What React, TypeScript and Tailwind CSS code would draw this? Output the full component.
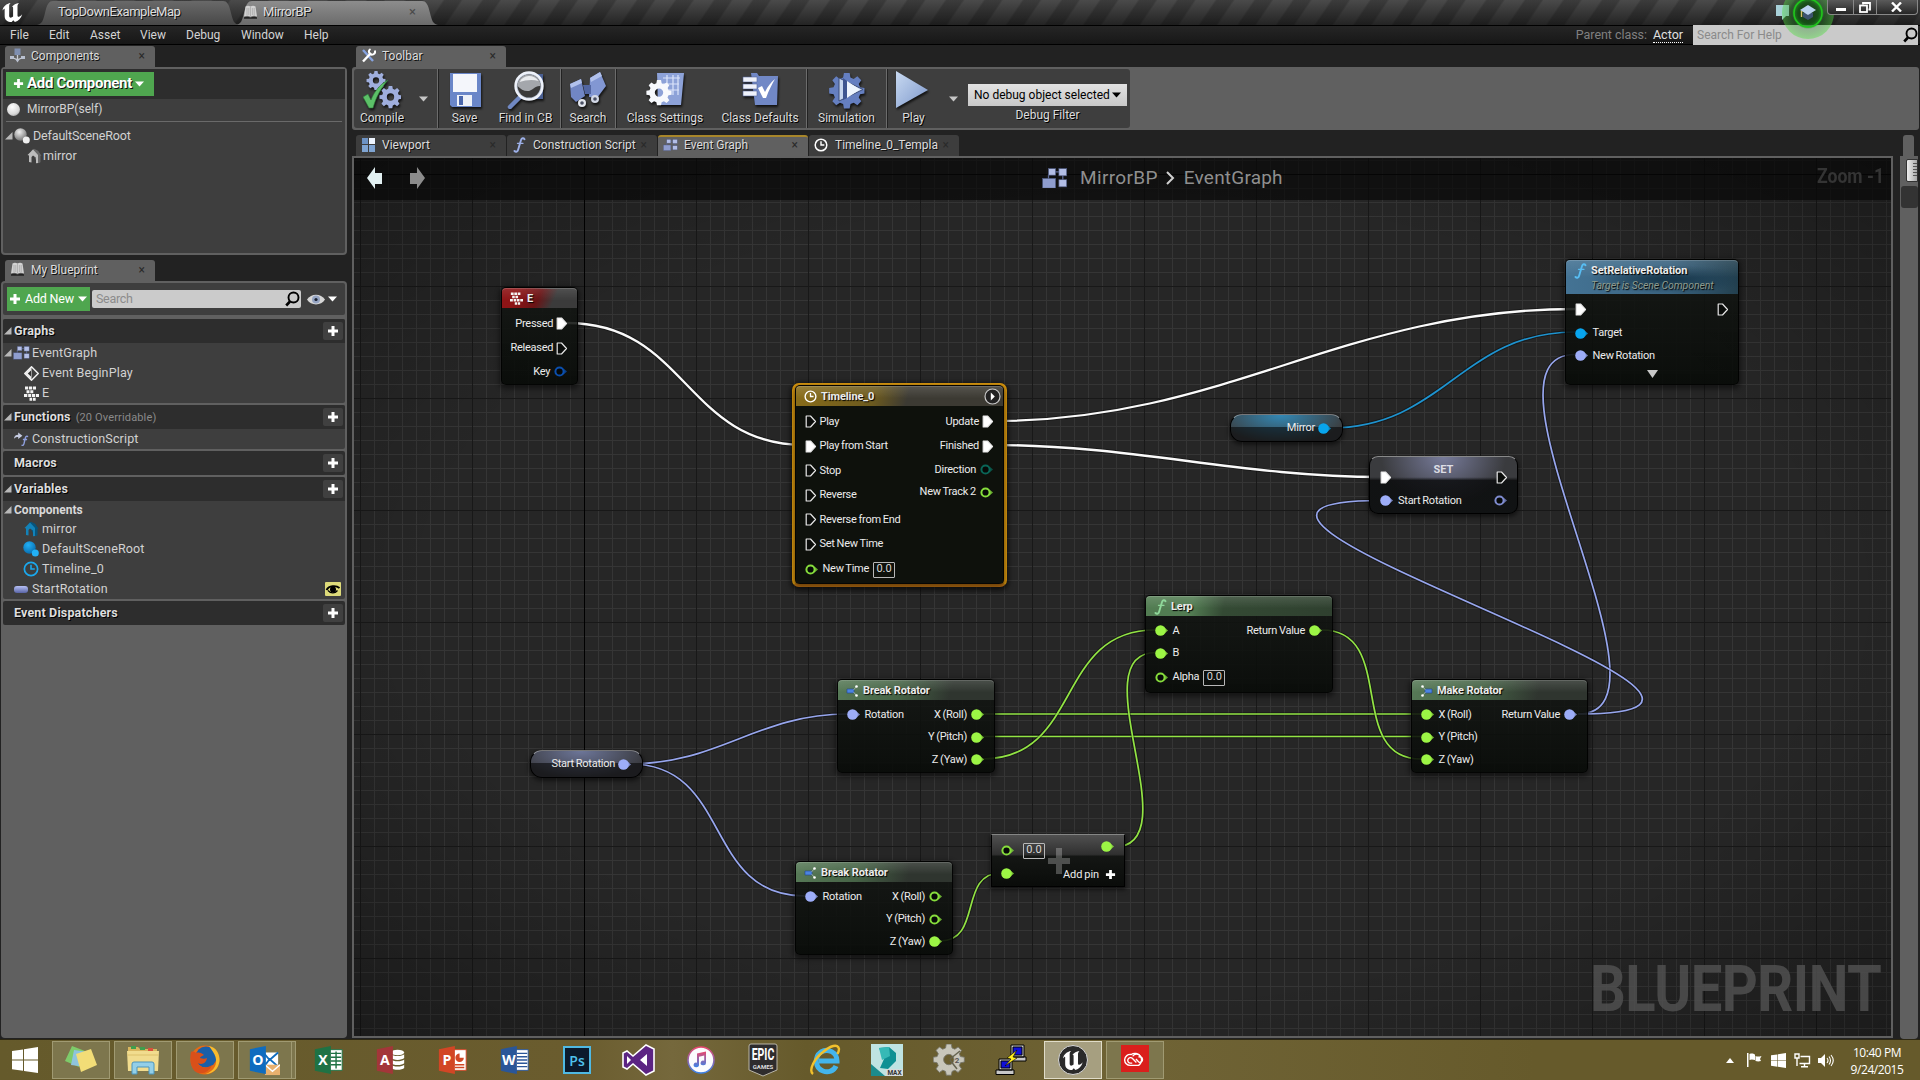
import React from "react";

type P = { children?: React.ReactNode };

const GREEN = "#9cf545";
const ROT = "#9dadf8";

/* ---------- shared glyphs ---------- */

function Unreal({ className = "" }: { className?: string }) {
  return (
    <svg viewBox="0 0 24 24" className={className} fill="currentColor">
      <path d="M1 10C2 5.500 5 3 9.500 2.200 8.300 3.400 8 4.200 8 5.500V15.500c0 1.200.6 1.900 1.500 1.900 1 0 1.900-.4 2.600-1.200V7.300c0-1-.4-1.500-1.300-1.200C12.600 3.700 15 2.500 18.200 2 17 3.400 16.700 4.200 16.700 5.500v9.300c0 1.100.5 1.600 1.300 1.600 1.100 0 2.300-.9 3.600-2.600-1 4-4 7-7.600 8.200L12.300 20l-1.700 2c-4.400-.1-7.300-2.400-7.300-6.200V8.500C3.300 7.600 2.700 7.700 1 10z" />
    </svg>
  );
}

function Plus({ s = 12, c = "#fff" }: { s?: number; c?: string }) {
  return (
    <svg width={s} height={s} viewBox="0 0 12 12" className="shrink-0">
      <path d="M4.500 1h3v3.500H11v3H7.500V11h-3V7.500H1v-3h3.500z" fill={c} />
    </svg>
  );
}

function Caret({ c = "#fff" }: { c?: string }) {
  return (
    <svg width="9" height="6" viewBox="0 0 9 6" className="shrink-0">
      <path d="M0 .5h9L4.500 5.500z" fill={c} />
    </svg>
  );
}

function Expand() {
  return (
    <svg width="8" height="8" viewBox="0 0 8 8" className="shrink-0">
      <path d="M7.500 0v7.500H0z" fill="#b8b8b8" />
    </svg>
  );
}

function Magnifier() {
  return (
    <svg width="15" height="16" viewBox="0 0 15 16" className="shrink-0" fill="none" stroke="#000">
      <circle cx="8.500" cy="6.500" r="5" strokeWidth="1.900" />
      <path d="M5 10.500L1.200 14.500" strokeWidth="2.600" />
    </svg>
  );
}

function Squares({ w = 17 }: { w?: number }) {
  return (
    <svg width={w} height={w * 0.8} viewBox="0 0 20 16" className="shrink-0">
      <path d="M8 3h8M16 3v9M5 5v5" stroke="#5f6b96" />
      <g fill="#b3bee6" stroke="#4c577e" strokeWidth=".5">
        <rect x="5" y=".5" width="5.500" height="5" />
        <rect x="13" y=".5" width="6" height="5.500" />
        <rect x=".5" y="8" width="10" height="7.500" fill="#8f9dce" />
        <rect x="13" y="9" width="6" height="5.500" />
      </g>
    </svg>
  );
}

function Book() {
  return (
    <svg width="15" height="15" viewBox="0 0 15 15" className="shrink-0">
      <path d="M2.500 1.500C4.500.5 6 .7 7.500 1.600 9 .7 10.700.5 12.500 1.500L14 11.500c-2.500-1-4.500-.8-6.500.2-2-1-4-1.200-6.500-.2z" fill="#d2d2d2" />
      <path d="M7.500 2v9.500M4 3v7M5.800 3v7M9.400 3v7M11.200 3v7" stroke="#9a9a9a" strokeWidth=".6" />
      <path d="M1 12.300c2.500-1 4.500-.8 6.500.2 2-1 4-1.200 6.500-.2v1.500H1z" fill="#222" />
    </svg>
  );
}

function Clock({ c = "#fff", s = 14 }: { c?: string; s?: number }) {
  return (
    <svg width={s} height={s} viewBox="0 0 14 14" className="shrink-0" fill="none" stroke={c}>
      <circle cx="7" cy="7" r="5.800" strokeWidth="1.500" />
      <path d="M7 3.300V7h3.300" strokeWidth="1.400" />
    </svg>
  );
}

function Keys({ s = 15 }: { s?: number }) {
  return (
    <svg width={s} height={s} viewBox="0 0 15 15" className="shrink-0" fill="#f4f4f4">
      <path d="M1 .5h3.200v3H1zM5 .5h3.200v3H5zM9 .5h3v3H9zM2.500 4.200h3v3h-3zM6.300 4.200h3v3h-3zM0 8h3.300v3H0zM4.200 8h3v3h-3zM8 8h3v3H8zM11.800 8H15v3h-3.200zM5.500 11.700h2.700v3H5.500zM9 11.700h2.700v3H9z" />
    </svg>
  );
}

function Func({ c = "#9db0e8", className = "" }: { c?: string; className?: string }) {
  return (
    <svg width="13" height="16" viewBox="0 0 13 16" className={"shrink-0 " + className} fill="none" stroke={c} strokeLinecap="round">
      <path d="M11.500 2.200C10.500.6 8.700 1 8 3L5.200 12.500C4.700 14.500 3 15.500 1.500 14" strokeWidth="1.900" />
      <path d="M4.500 6.300h5.500" strokeWidth="1.300" />
    </svg>
  );
}

function House({ c, d }: { c: string; d: string }) {
  return (
    <svg width="15" height="16" viewBox="0 0 15 16" className="shrink-0">
      <path d="M4.500 2.500L7 .8l4 2 3.500 5-1.500.2v6.500h-3z" fill={c} />
      <path d="M.5 7L6 1.500 11.500 7.500V15l-2.500.3V9.500L6 7.500 4.500 9v5.500L2 14V7.500z" fill={d} />
      <path d="M11 3v12l2.500-.8V7z" fill={c} />
    </svg>
  );
}

function Spheres({ c, d, id }: { c: string; d: string; id: string }) {
  return (
    <svg width="16" height="16" viewBox="0 0 16 16" className="shrink-0">
      <defs>
        <radialGradient id={id} cx=".4" cy=".3" r=".8">
          <stop offset="0" stopColor={c} />
          <stop offset="1" stopColor={d} />
        </radialGradient>
      </defs>
      <circle cx="6.500" cy="6.500" r="6.200" fill={`url(#${id})`} />
      <circle cx="12.300" cy="12" r="3.500" fill={c} />
    </svg>
  );
}

/* ---------- title bar and menu ---------- */

function WindowTab({ children, active }: P & { active?: boolean }) {
  return (
    <div className={"relative flex h-6 w-[202px] items-center " + (active ? "z-10 -ml-[3px]" : "")}>
      <svg width="202" height="24" viewBox="0 0 202 24" className="absolute inset-0">
        <defs>
          <linearGradient id={active ? "wa" : "wb"} x1="0" y1="0" x2="0" y2="1">
            <stop offset="0" stopColor={active ? "#8d8d8d" : "#696969"} />
            <stop offset="1" stopColor={active ? "#6b6b6b" : "#484848"} />
          </linearGradient>
        </defs>
        <path d="M0 24c5-1 6-4 8-12 2-9 4-12 8-12h170c4 0 6 3 8 12 2 8 3 11 8 12z" fill={active ? "url(#wa)" : "url(#wb)"} />
      </svg>
      <div className="relative flex w-full items-center pb-[2px] text-[13px] text-[#dedede] [text-shadow:1px_1px_0_#111]">{children}</div>
    </div>
  );
}

function TitleBar() {
  return (
    <div className="relative flex h-[25px] items-end bg-[linear-gradient(#4a4a4a,#242424)]">
      <div className="absolute inset-0 bg-[repeating-linear-gradient(124deg,transparent_0_15px,rgba(0,0,0,0.2)_17px_30px,transparent_32px)]" />
      <Unreal className="relative mb-px ml-px h-[23px] w-[24px] text-white" />
      <div className="w-[12px]" />
      <WindowTab>
        <span className="ml-[21px] tracking-[-0.45px]">TopDownExampleMap</span>
      </WindowTab>
      <WindowTab active>
        <span className="ml-[7px] flex items-center gap-[5px] tracking-[-0.4px]">
          <Book />
          MirrorBP
        </span>
        <span className="ml-auto mr-[22px] text-[13px] text-[#4a4a4a] [text-shadow:none]">×</span>
      </WindowTab>
      <div className="relative z-20 ml-auto flex h-full items-start">
        <svg width="68" height="25" viewBox="0 0 68 25" className="overflow-visible">
          <defs>
            <radialGradient id="glow" cx=".5" cy=".5" r=".5">
              <stop offset="0" stopColor="#123012" stopOpacity=".7" />
              <stop offset=".4" stopColor="#125a12" stopOpacity=".8" />
              <stop offset=".54" stopColor="#1a9a1a" stopOpacity=".75" />
              <stop offset=".62" stopColor="#2a8f28" stopOpacity=".35" />
              <stop offset="1" stopColor="#50e040" stopOpacity=".45" />
            </radialGradient>
            <clipPath id="vis">
              <rect x="-20" y="0" width="120" height="60" />
            </clipPath>
          </defs>
          <path d="M17 5h13v11h-3l-4 4v-4h-6z" fill="#a8d0d8" />
          <g clipPath="url(#vis)">
            <circle cx="49" cy="13" r="26" fill="url(#glow)" />
            <circle cx="49" cy="13" r="14" fill="none" stroke="#20c41c" strokeWidth="1.600" />
          </g>
          <path d="M44 13v4l5 3 5-3v-4z" fill="#3d5470" />
          <path d="M41 10l8-5 8 5-8 5z" fill="#bcd4ef" />
          <path d="M42.500 11v6" stroke="#d8c070" strokeWidth="1.400" />
        </svg>
        <div className="flex h-[15px] divide-x divide-[#888] rounded-b-sm border border-t-0 border-[#888] bg-[linear-gradient(#5a5a5a,#262626)]">
          <div className="flex w-[26px] items-center justify-center">
            <div className="mt-1 h-[3px] w-[10px] bg-white" />
          </div>
          <div className="flex w-[23px] items-center justify-center">
            <svg width="12" height="11" viewBox="0 0 12 11" fill="none" stroke="#fff" strokeWidth="1.800">
              <path d="M4 2.500V1h7v6.500H9.500" />
              <rect x="1" y="3.500" width="7" height="6.500" />
            </svg>
          </div>
          <div className="flex w-[40px] items-center justify-center pr-[2px]">
            <svg width="11" height="10" viewBox="0 0 11 10" stroke="#fff" strokeWidth="2.400">
              <path d="M1 .5l9 9M10 .5l-9 9" />
            </svg>
          </div>
        </div>
        <div className="w-[2px]" />
      </div>
    </div>
  );
}

function MenuBar() {
  return (
    <div className="flex h-5 items-center border-y border-black bg-[linear-gradient(#252525,#171717)] pl-[10px] text-[12px] text-[#d4d4d4]">
      <span className="w-[39px]">File</span>
      <span className="w-[41px]">Edit</span>
      <span className="w-[50px]">Asset</span>
      <span className="w-[46px]">View</span>
      <span className="w-[55px]">Debug</span>
      <span className="w-[63px]">Window</span>
      <span>Help</span>
      <span className="ml-auto mr-[6px] text-[12.500px] tracking-[-0.05px] text-[#808080]">Parent class:</span>
      <span className="mr-[10px] border-b border-dotted border-white text-[12.500px] leading-[15px] text-[#e0e0e0]">Actor</span>
      <div className="mr-[2px] flex h-5 w-[225px] items-center justify-between bg-[#cacaca] pl-[4px] text-[12px] text-[#8b8b8b]">
        <span>Search For Help</span>
        <Magnifier />
      </div>
    </div>
  );
}

/* ---------- docking ---------- */

function DockTab({ icon, children, tone = "active" }: P & { icon: React.ReactNode; tone?: "active" | "idle" | "hot" }) {
  const tones = {
    active: "bg-[#606060] pb-[2px]",
    idle: "bg-[#3d3d3d] pb-[2px]",
    hot: "bg-[#606060] border-t-2 border-[#a8862a] pb-[3px]",
  };
  return (
    <div className={"flex h-[21px] w-[150px] items-center rounded-t-[3px] pl-1 text-[12px] text-[#dcdcdc] " + tones[tone]}>
      <span className="flex w-[16px] justify-center">{icon}</span>
      <span className="ml-[6px] w-[107.500px] whitespace-nowrap [text-shadow:1px_1px_0_#111]">{children}</span>
      <span className="text-[12px] text-[#2a2a2a]">×</span>
    </div>
  );
}

function ComponentsPanel() {
  return (
    <div className="flex h-[188px] flex-col rounded border-2 border-[#606060] bg-[#3e3e3e] text-[13px] text-[#d2d2d2]">
      <div className="h-[30px] bg-[#2d2d2d] px-[3px] pt-[3px]">
        <div className="flex h-[24px] w-[148px] items-center gap-[3px] bg-[#4fa64f] pb-px pl-[7px] text-[15px] font-bold tracking-[-0.3px] text-white [text-shadow:1px_1px_0_#111]">
          <Plus s={11} />
          Add Component
          <Caret />
        </div>
      </div>
      <div className="mx-[3px] flex h-[23px] items-center border-b border-[#6a6a6a] pb-[2px] pl-px">
        <Sphere />
        <span className="ml-[7px] text-[12px]">MirrorBP(self)</span>
      </div>
      <div className="mt-[4px] flex h-5 items-center pl-[2px] text-[12.500px]">
        <Expand />
        <span className="w-px" />
        <Spheres c="#efefef" d="#666" id="sgrey" />
        <span className="ml-[3px] tracking-[-0.15px]">DefaultSceneRoot</span>
      </div>
      <div className="flex h-5 items-center pl-[24px] text-[12.500px]">
        <House c="#666" d="#bcbcbc" />
        <span className="ml-px">mirror</span>
      </div>
    </div>
  );
}

function Sphere() {
  return <span className="h-[13px] w-[13px] rounded-full bg-[radial-gradient(circle_at_40%_30%,#fff,#d8d8d8_60%,#777)]" />;
}

function Section({ title, note, closed, children }: P & { title: string; note?: string; closed?: boolean }) {
  return (
    <div className="mb-[2px] overflow-hidden rounded-[2px] bg-[#3e3e3e]">
      <div className="flex h-[24px] items-center bg-[#2d2d2d] pl-[1px] pr-[2.500px]">
        {closed ? <span className="w-2" /> : <Expand />}
        <span className="ml-[2px] text-[12.500px] font-bold tracking-[0.15px] text-[#dedede] [text-shadow:1px_1px_0_#000]">{title}</span>
        {note && <span className="ml-[5px] mt-[2px] text-[11px] tracking-[0.15px] text-[#8a8a8a]">{note}</span>}
        <span className="ml-auto flex h-[18px] w-5 items-center justify-center rounded-[2px] bg-[#404040]">
          <Plus />
        </span>
      </div>
      {children}
    </div>
  );
}

function Row({ icon, children, deep }: P & { icon: React.ReactNode; deep?: boolean }) {
  return (
    <div className={"flex h-5 items-center text-[12.500px] tracking-[0.15px] text-[#d2d2d2] " + (deep ? "pl-[20px]" : "pl-[10px]")}>
      <span className="flex w-[16px] items-center justify-center">{icon}</span>
      <span className="ml-[3px]">{children}</span>
    </div>
  );
}

function MyBlueprint() {
  return (
    <div className="flex flex-1 flex-col rounded bg-[#606060] px-[2px] pt-[2px]">
      <div className="mb-[4px] flex h-[32px] items-center rounded-[2px] bg-[#3e3e3e] pl-[4px]">
        <div className="flex h-[24px] w-[83px] items-center gap-[4px] bg-[#4fa64f] pl-[2px] text-[12.500px] tracking-[-0.2px] text-white">
          <Plus />
          <span>Add New</span>
          <Caret />
        </div>
        <div className="ml-[2px] flex h-[18px] w-[209px] items-center justify-between rounded-[2px] bg-[#cbcbcb] pl-[4px] pr-px text-[12.500px] text-[#8b8b8b]">
          <span className="tracking-[-0.3px]">Search</span>
          <Magnifier />
        </div>
        <svg width="18" height="11" viewBox="0 0 18 11" className="ml-[6px]">
          <path d="M0 5.500C4-1 14-1 18 5.500 14 12 4 12 0 5.500z" fill="#d6d6d6" />
          <circle cx="9" cy="5.500" r="4" fill="#94a3c2" />
          <circle cx="9" cy="5.500" r="1.600" fill="#1a2233" />
        </svg>
        <span className="ml-[3px] flex">
          <Caret />
        </span>
      </div>
      <Section title="Graphs">
        <div className="flex h-5 items-center pl-px text-[12.500px] tracking-[0.15px] text-[#d2d2d2]">
          <Expand />
          <span className="ml-px flex w-[17px]">
            <Squares />
          </span>
          <span className="ml-[2px]">EventGraph</span>
        </div>
        <Row
          deep
          icon={
            <svg width="15" height="15" viewBox="0 0 15 15">
              <path d="M7.500.8l6.700 6.700-6.700 6.700L.8 7.500z" fill="none" stroke="#eee" strokeWidth="1.500" />
              <path d="M7.500 1v13L1 7.500z" fill="#eee" />
              <path d="M7 4.500v6L3.800 7.500z" fill="#333" />
            </svg>
          }
        >
          Event BeginPlay
        </Row>
        <Row deep icon={<Keys />}>
          E
        </Row>
      </Section>
      <Section title="Functions" note="(20 Overridable)">
        <Row
          icon={
            <svg width="17" height="16" viewBox="0 0 17 16" fill="none">
              <path d="M1 8C1 5 3 3.500 5.500 3.500V1L10 4.500 5.500 8V6C3.500 6 2 6.500 1 8z" fill="#c5cbe0" />
              <path d="M16 5.500c-1.400-1-2.500-.3-2.900 1.300L11.700 13c-.4 1.700-1.500 2.200-2.700 1.400M10.500 8.500h4.500" stroke="#8f9fdd" strokeWidth="1.500" />
            </svg>
          }
        >
          ConstructionScript
        </Row>
      </Section>
      <Section title="Macros" closed />
      <Section title="Variables">
        <div className="flex h-[18px] items-center pl-px text-[12px] font-bold text-[#d8d8d8]">
          <Expand />
          <span className="ml-[2px]">Components</span>
        </div>
        <Row deep icon={<House c="#07547c" d="#1382b8" />}>
          mirror
        </Row>
        <Row deep icon={<Spheres c="#22b0f5" d="#0566a8" id="sblue" />}>
          DefaultSceneRoot
        </Row>
        <Row deep icon={<Clock c="#1aa8ee" s={16} />}>
          Timeline_0
        </Row>
        <div className="flex items-center justify-between pr-[4px]">
          <Row icon={<span className="h-[7px] w-[14px] rounded-[3px] bg-[linear-gradient(#b6c0f5,#5863a5)]" />}>StartRotation</Row>
          <svg width="16" height="14" viewBox="0 0 16 14">
            <rect width="16" height="14" rx="1" fill="#dedb7a" />
            <path d="M1.500 8C4 3.500 11 3 14.500 6" fill="none" stroke="#000" strokeWidth="1.800" />
            <circle cx="8" cy="7.500" r="3" fill="#000" />
            <path d="M3 8.500c3 3.500 7 3 9.500 0" fill="none" stroke="#000" strokeWidth="1.200" />
          </svg>
        </div>
      </Section>
      <Section title="Event Dispatchers" closed />
    </div>
  );
}

/* ---------- toolbar ---------- */

const gearOutline =
  "M8.300 0h3.400l.5 2.700 1.900.8L16.300 2l2.300 2.300-1.500 2.300.8 1.900 2.600.4v3.300l-2.600.5-.8 1.900 1.500 2.200-2.300 2.400-2.200-1.500-1.900.8-.5 2.600H8.300l-.5-2.600-1.900-.8-2.200 1.500-2.300-2.400 1.500-2.200-.8-1.900L-.5 12.200V8.900l2.600-.4.8-1.900L1.400 4.300 3.700 2l2.200 1.500 1.900-.8z";
const gearPath = gearOutline + "M10 7a3.500 3.500 0 100 7 3.500 3.500 0 000-7z";

function ToolIcon({ children }: P) {
  return (
    <svg width="38" height="38" viewBox="0 0 38 38" className="drop-shadow-[1px_2px_1px_rgba(0,0,0,0.7)]">
      {children}
    </svg>
  );
}

function Tool({ label, icon, w }: { label: string; icon: React.ReactNode; w: string }) {
  return (
    <div className={"flex shrink-0 flex-col items-center " + w}>
      <div className="flex h-[40px] items-center pt-[2px]">{icon}</div>
      <span className="mt-px whitespace-nowrap text-[12px] leading-4 text-[#dcdcdc] [text-shadow:1px_1px_0_#000]">{label}</span>
    </div>
  );
}

function Rule() {
  return <div className="h-full w-px shrink-0 bg-[#6c6c6c] shadow-[1px_0_0_#222]" />;
}

function Toolbar() {
  return (
    <div className="h-[63px] rounded-[3px] bg-[#606060] p-[2px] pb-[2px]">
      <div className="flex h-[59px] w-[776px] rounded-[3px] bg-[#3e3e3e]">
        <Tool
          w="w-[56px]"
          label="Compile"
          icon={
            <ToolIcon>
              <g fill="#9faedd" fillRule="evenodd">
                <path transform="translate(4 0) scale(.9)" d={gearPath} />
                <path transform="translate(17 15) scale(1.050)" d={gearPath} />
              </g>
              <path d="M0 26l5-3 3 6C11 21 17 13 25 9 18 17 13 26 10 37H6z" fill="#5cc068" stroke="#2f7a3a" strokeWidth=".6" />
            </ToolIcon>
          }
        />
        <div className="flex w-[27px] items-center pl-[9px]">
          <Caret c="#c6c6c6" />
        </div>
        <Rule />
        <Tool
          w="w-[53px]"
          label="Save"
          icon={
            <ToolIcon>
              <path d="M4 2h31v34H6l-2-2z" fill="#6a86c8" />
              <path d="M7 3h24v18H7z" fill="#f4f6fb" />
              <path d="M11 24h15v11H11z" fill="#eef1f8" />
              <path d="M13 25h4v9h-4z" fill="#4a66ab" />
            </ToolIcon>
          }
        />
        <Tool
          w="w-[69px]"
          label="Find in CB"
          icon={
            <ToolIcon>
              <path d="M15 7l3-4h18v25H15z" fill="#4a5f92" />
              <path d="M13 26L3 36" stroke="#7088c2" strokeWidth="4.500" strokeLinecap="round" />
              <circle cx="22" cy="15" r="13.500" fill="#b9c2d3" stroke="#eef2fa" strokeWidth="2.400" />
              <circle cx="22" cy="15" r="11.500" fill="#3a3a3a" />
              <path d="M10.500 15a11.500 11.500 0 0123 0c-5-1-8 5-13 5-4 0-7-2-10-5z" fill="#a4a7ac" />
              <path d="M12.500 11a11 11 0 0119-1c-6-2-13-1-19 1z" fill="#e9ebee" />
            </ToolIcon>
          }
        />
        <Rule />
        <Tool
          w="w-[54px]"
          label="Search"
          icon={
            <ToolIcon>
              <path d="M1 13l11-5 4 17-9 6-5-5z" fill="#7186c4" />
              <path d="M21 7l10-6 6 14-9 12-8-1z" fill="#8297d3" />
              <path d="M14 14h8v9h-6z" fill="#5266a2" />
              <path d="M1 13l11-5 1 4-11 5zM21 7l10-6 2 4-11 6z" fill="#b1c1ec" />
              <circle cx="13" cy="32" r="4" fill="#e3e6ee" />
              <circle cx="26" cy="28" r="4" fill="#d3d8e6" />
              <circle cx="13" cy="32" r="1.800" fill="#4a5064" />
              <circle cx="26" cy="28" r="1.800" fill="#4a5064" />
            </ToolIcon>
          }
        />
        <Rule />
        <Tool
          w="w-[98px]"
          label="Class Settings"
          icon={
            <ToolIcon>
              <path d="M11 2h27l-3 32H12z" fill="#8da2d8" />
              <path d="M17 7h17M17 13h16M17 19h16M21 4v20M27 4v20M32 4v20" stroke="#dbe4fa" strokeWidth="1.200" />
              <g fill="#f7f9fd" fillRule="evenodd">
                <path transform="translate(1 9) scale(1.200)" d={gearPath} />
              </g>
            </ToolIcon>
          }
        />
        <Tool
          w="w-[92px]"
          label="Class Defaults"
          icon={
            <ToolIcon>
              <path d="M10 2h6l2 3h19l-1 29H14z" fill="#7188c6" />
              <path d="M2 6h14v5H2zM2 13h14v5H2zM2 20h14v5H2z" fill="#eef1fa" stroke="#55669a" strokeWidth=".6" />
              <path d="M17 17l4-2 3 6c3-6 6-10 10-13-3 5-6 11-9 19h-3z" fill="#fff" />
            </ToolIcon>
          }
        />
        <Rule />
        <Tool
          w="w-[79px]"
          label="Simulation"
          icon={
            <ToolIcon>
              <path transform="translate(2 2) scale(1.680)" fill="#657fc0" d={gearOutline} />
              <path d="M11 7v23l24-11.500z" fill="#c6d6ee" stroke="#3d4d78" />
              <path d="M15 7v22l4-2V10z" fill="#3f5690" />
              <path d="M19 10v17l13-8.500z" fill="#eef5fd" />
            </ToolIcon>
          }
        />
        <Rule />
        <Tool
          w="w-[53px]"
          label="Play"
          icon={
            <ToolIcon>
              <defs>
                <linearGradient id="pl" x1="0" y1="0" x2="1" y2="1">
                  <stop offset="0" stopColor="#c9daf1" />
                  <stop offset="1" stopColor="#7d98cc" />
                </linearGradient>
              </defs>
              <path d="M1 0v37l32-18z" fill="url(#pl)" />
            </ToolIcon>
          }
        />
        <div className="flex w-[28px] items-center pl-[9px]">
          <Caret c="#c6c6c6" />
        </div>
        <div className="flex w-[159px] flex-col items-center pt-[15px]">
          <div className="flex h-[22px] w-[159px] items-center justify-between bg-[linear-gradient(#e2e2e2,#c8c8c8)] pl-[6px] pr-[6px] text-[12px] text-black">
            <span className="whitespace-nowrap">No debug object selected</span>
            <Caret c="#000" />
          </div>
          <span className="mt-px text-[12px] leading-4 text-[#dcdcdc] [text-shadow:1px_1px_0_#000]">Debug Filter</span>
        </div>
      </div>
    </div>
  );
}

/* ---------- graph ---------- */

function ExecPin({ on }: { on?: boolean }) {
  return (
    <svg width="12" height="13" viewBox="0 0 12 13" className="shrink-0">
      <path d="M1.200 1h4.300l5 5.500-5 5.500H1.200z" fill={on ? "#fff" : "#0a0c0a"} stroke="#e8e8e8" strokeWidth="1.200" strokeLinejoin="round" />
    </svg>
  );
}

function DataPin({ on, c }: { on?: boolean; c: string }) {
  return (
    <svg width="14" height="11" viewBox="0 0 14 11" className="shrink-0">
      <path d="M9.500 2.500L13 5.500 9.500 8.500z" fill={c} opacity=".75" />
      {on ? <circle cx="5.500" cy="5.500" r="5.300" fill={c} /> : <circle cx="5.500" cy="5.500" r="4.100" fill="#070907" stroke={c} strokeWidth="2" />}
    </svg>
  );
}

type Pin = { label?: string; kind: "exec" | "data"; on?: boolean; c?: string; box?: boolean };

function PinRow({ p, side }: { p: Pin; side: "in" | "out" }) {
  const h = p.kind === "exec" ? "h-[24.500px]" : p.box ? "h-[26px]" : "h-[22.500px]";
  const glyph = p.kind === "exec" ? <ExecPin on={p.on} /> : <DataPin on={p.on} c={p.c ?? GREEN} />;
  const gap = p.kind === "exec" ? "gap-[3px]" : "gap-[4px]";
  return (
    <div className={"flex items-center whitespace-nowrap " + h + " " + gap + (side === "out" ? " flex-row-reverse" : "")}>
      {glyph}
      <span>{p.label}</span>
      {p.box && <ValueBox />}
    </div>
  );
}

function ValueBox() {
  return <span className="flex h-4 w-[22px] items-center justify-center rounded-[1px] border border-[#b8b8b8] text-[11px] tracking-normal text-[#d8d8d8]">0.0</span>;
}

function Pins({ ins = [], outs = [] }: { ins?: Pin[]; outs?: Pin[] }) {
  return (
    <div className="flex justify-between pl-[8.500px] pr-[9px] pt-[3.500px] text-[11px] tracking-[-0.25px] text-[#ececec] [word-spacing:-0.600px]">
      <div>
        {ins.map((p, i) => (
          <PinRow key={i} p={p} side="in" />
        ))}
      </div>
      <div>
        {outs.map((p, i) => (
          <PinRow key={i} p={p} side="out" />
        ))}
      </div>
    </div>
  );
}

const shell = "absolute rounded-[5px] border border-black/80 shadow-[0_2px_5px_2px_rgba(0,0,0,0.45)]";
const body = "bg-[linear-gradient(rgba(20,23,20,0.88),rgba(8,11,8,0.9))]";

const heads = {
  red: "bg-[linear-gradient(rgba(255,255,255,0.1),transparent_60%),linear-gradient(115deg,#8e1416_20%,#6a1315_48%,#3b3b3b_68%)]",
  gold: "bg-[linear-gradient(rgba(255,255,255,0.12),transparent_60%),linear-gradient(105deg,#8a6d1a,#6c5a1f_38%,#3c3a33_54%)]",
  green: "bg-[linear-gradient(rgba(255,255,255,0.12),transparent_60%),linear-gradient(105deg,#577a57,#466346_40%,#2f352f_72%)]",
  lerp: "bg-[linear-gradient(rgba(255,255,255,0.12),transparent_60%),linear-gradient(100deg,#527c52_25%,#344a34_42%,#2f402f)]",
  blue: "bg-[linear-gradient(rgba(255,255,255,0.1),transparent_50%),radial-gradient(ellipse_at_60%_55%,#1a3a4e_8%,transparent_55%),linear-gradient(90deg,#447394,#3a6380_60%,#23404f)]",
};

function Node({
  x,
  y,
  w,
  h,
  head,
  icon,
  title,
  sub,
  extra,
  children,
}: P & { x: number; y: number; w: number; h: number; head: keyof typeof heads; icon: React.ReactNode; title: string; sub?: string; extra?: React.ReactNode }) {
  return (
    <div className={shell + " flex flex-col " + body} style={{ left: x, top: y, width: w, height: h }}>
      <div className={"flex shrink-0 rounded-t-[4px] border-t border-white/25 pl-[7px] pr-[3px] " + heads[head] + (sub ? " h-[34px] pt-[2px]" : " h-[20px] items-center")}>
        <span className="flex w-[15px] justify-center">{icon}</span>
        <div className="ml-[3px] flex flex-col text-[#ececec] [text-shadow:1px_1px_1px_#000]">
          <span className="whitespace-nowrap text-[11px] font-bold leading-[15px] tracking-[-0.1px]">{title}</span>
          {sub && <span className="whitespace-nowrap text-[10.500px] italic leading-[15px] tracking-[-0.1px] text-[#8d9c8e]">{sub}</span>}
        </div>
        {extra}
      </div>
      {children}
    </div>
  );
}

function RotIcon({ flip }: { flip?: boolean }) {
  return (
    <svg width="13" height="14" viewBox="0 0 13 14" className={"shrink-0 " + (flip ? "-scale-x-100" : "")}>
      <path d="M1 5h7v4H1z" fill="#4c84e0" stroke="#1f4590" strokeWidth=".6" />
      <path d="M7.500 6l2.500-3M7.500 8l2.500 3" stroke="#9ab0a0" />
      <circle cx="10.500" cy="2.500" r="1.300" fill="#fff" />
      <circle cx="10.500" cy="11.500" r="1.300" fill="#fff" />
    </svg>
  );
}

function VarNode({ x, y, w, label, c, tint }: { x: number; y: number; w: number; label: string; c: string; tint: string }) {
  return (
    <div
      className={"absolute flex h-[28px] items-center justify-end gap-[3px] rounded-[12px] border border-black border-t-white/40 pr-[10px] text-[11px] tracking-[-0.25px] text-[#ececec] [word-spacing:-0.600px] shadow-[0_2px_4px_1px_rgba(0,0,0,0.5)] " + tint}
      style={{ left: x, top: y, width: w }}
    >
      <span className="mt-px whitespace-nowrap">{label}</span>
      <DataPin on c={c} />
    </div>
  );
}

type Wire = { a: [number, number]; b: [number, number]; c: string; k?: number; w?: number };

const wires: Wire[] = [
  { a: [567, 323], b: [805, 445], c: "#fafafa", w: 2.3 },
  { a: [994, 421], b: [1575, 309], c: "#fafafa", w: 2.3 },
  { a: [994, 445], b: [1381, 477], c: "#fafafa", w: 2.3 },
  { a: [1330, 428], b: [1575, 332], c: "#1e93cf" },
  { a: [1578, 714], b: [1575, 354.5], c: "#97a6ee", k: 112 },
  { a: [1578, 714], b: [1381, 500.5], c: "#97a6ee", k: 284 },
  { a: [982, 714], b: [1421, 714], c: "#92e444" },
  { a: [982, 736.5], b: [1421, 736.5], c: "#92e444" },
  { a: [982, 759], b: [1155, 630], c: "#92e444" },
  { a: [1322, 630], b: [1421, 759], c: "#92e444" },
  { a: [1114, 847], b: [1156, 652.5], c: "#92e444", k: 78 },
  { a: [940, 941], b: [1001, 873], c: "#92e444" },
  { a: [630, 764], b: [847, 714], c: "#97a6ee" },
  { a: [630, 764], b: [805, 896], c: "#97a6ee" },
];

function wirePath({ a, b, k }: Wire) {
  const off = k ?? (Math.abs(b[0] - a[0]) + Math.abs(b[1] - a[1])) / 3;
  return `M${a[0]} ${a[1]}C${a[0] + off} ${a[1]} ${b[0] - off} ${b[1]} ${b[0]} ${b[1]}`;
}

const exec = (label?: string, on?: boolean): Pin => ({ kind: "exec", label, on });
const data = (label: string, on?: boolean, c: string = GREEN, box?: boolean): Pin => ({ kind: "data", label, on, c, box });

function Graph() {
  return (
    <div className="relative h-[882px] w-[1541px] overflow-hidden border-2 border-[#606060] bg-[#262626]">
      {/* Canvas plane, in screen units */}
      <div className="absolute -left-[354px] -top-[158px] h-[1080px] w-[1920px]">
        <svg width="1920" height="1080" className="absolute inset-0">
          <defs>
            <pattern id="minor" x="584" y="174" width="14" height="14" patternUnits="userSpaceOnUse">
              <path d="M.5 0v14M0 .5h14" stroke="#353535" />
            </pattern>
            <pattern id="major" x="584" y="174" width="112" height="112" patternUnits="userSpaceOnUse">
              <path d="M.5 0v112M0 .5h112" stroke="#181818" />
            </pattern>
            <radialGradient id="vig" cx=".5" cy=".5" r=".75">
              <stop offset=".6" stopColor="#000" stopOpacity="0" />
              <stop offset="1" stopColor="#000" stopOpacity=".35" />
            </radialGradient>
          </defs>
          <rect width="1920" height="1080" fill="url(#minor)" />
          <rect width="1920" height="1080" fill="url(#major)" />
          <path d="M584.500 0v1080M0 174.500h1920" stroke="#000" />
          <rect x="354" y="158" width="1540" height="880" fill="url(#vig)" />
        </svg>

        <span className="absolute left-[1590px] top-[957px] origin-left scale-x-[0.870] text-[64.500px] font-bold leading-[64px] tracking-[-0.6px] text-[#525252]/80">
          BLUEPRINT
        </span>

        <svg width="1920" height="1080" className="absolute inset-0" fill="none">
          {wires.map((w, i) => (
            <g key={i}>
              <path d={wirePath(w)} stroke="#000" strokeOpacity=".35" strokeWidth={(w.w ?? 1.7) + 2} />
              <path d={wirePath(w)} stroke={w.c} strokeWidth={w.w ?? 1.7} />
            </g>
          ))}
        </svg>

        <Node x={501} y={287} w={77} h={98} head="red" icon={<Keys s={13} />} title="E">
          <Pins outs={[exec("Pressed", true), exec("Released"), data("Key", false, "#0b4fae")]} />
        </Node>

        <div className="absolute left-[792px] top-[383px] h-[204px] w-[215px] rounded-[7px] border-[3px] border-[#e6a010] border-b-[#cc7a12] bg-[#5c3c08] shadow-[0_2px_5px_2px_rgba(0,0,0,0.45)]" />
        <Node
          x={795}
          y={385}
          w={209}
          h={199}
          head="gold"
          icon={<Clock s={13} />}
          title="Timeline_0"
          extra={
            <svg width="17" height="17" viewBox="0 0 17 17" className="-mr-px ml-auto shrink-0">
              <circle cx="8.500" cy="8.500" r="7.500" fill="#222" stroke="#c8c8c8" strokeWidth="1.200" />
              <path d="M6.800 4.500v8l4-4z" fill="#fff" />
            </svg>
          }
        >
          <div className="flex-1 bg-[#0e110c]">
            <Pins
              ins={[exec("Play"), exec("Play from Start", true), exec("Stop"), exec("Reverse"), exec("Reverse from End"), exec("Set New Time"), data("New Time", false, "#86dd3c", true)]}
              outs={[exec("Update", true), exec("Finished", true), data("Direction", false, "#0a6658"), data("New Track 2", false, "#86dd3c")]}
            />
          </div>
        </Node>

        <Node x={1565} y={259} w={174} h={126} head="blue" icon={<Func c="#58bdf2" />} title="SetRelativeRotation" sub="Target is Scene Component">
          <Pins ins={[exec(undefined, true), data("Target", true, "#08a5ee"), data("New Rotation", true, ROT)]} outs={[exec()]} />
          <svg width="11" height="8" viewBox="0 0 11 8" className="mx-auto mt-[3px] shrink-0">
            <path d="M0 0h11L5.500 8z" fill="#c8c8c8" />
          </svg>
        </Node>

        <VarNode x={1230} y={414} w={113} label="Mirror" c="#08a5ee" tint="bg-[linear-gradient(transparent_45%,rgba(0,0,0,0.55)_48%),radial-gradient(ellipse_at_45%_0%,#3288b5,#3b3f42_75%)]" />
        <VarNode x={530} y={750} w={113} label="Start Rotation" c={ROT} tint="bg-[linear-gradient(transparent_45%,rgba(0,0,0,0.55)_48%),radial-gradient(ellipse_at_45%_0%,#6d7699,#3b3c42_75%)]" />

        <div className="absolute left-[1369px] top-[456px] h-[58px] w-[149px] rounded-[9px] border border-black border-t-white/50 bg-[linear-gradient(transparent_36%,rgba(8,9,10,0.82)_42%),radial-gradient(ellipse_at_50%_0%,#777b9a,#3a3b3e_60%)] shadow-[0_2px_4px_1px_rgba(0,0,0,0.5)]">
          <span className="absolute inset-x-0 top-[5px] text-center text-[11px] font-bold leading-4 text-[#dcdce4]">SET</span>
          <div className="pl-[1.500px] pt-[4.500px]">
            <Pins ins={[exec(undefined, true), data("Start Rotation", true, ROT)]} outs={[exec(), data("", false, "#7f8cd0")]} />
          </div>
        </div>

        <Node x={1145} y={595} w={188} h={98} head="lerp" icon={<Func c="#8fd89a" />} title="Lerp">
          <Pins ins={[data("A", true), data("B", true), data("Alpha", false, "#86dd3c", true)]} outs={[data("Return Value", true)]} />
        </Node>

        <Node x={1411} y={679} w={177} h={94} head="green" icon={<RotIcon flip />} title="Make Rotator">
          <Pins ins={[data("X (Roll)", true), data("Y (Pitch)", true), data("Z (Yaw)", true)]} outs={[data("Return Value", true, ROT)]} />
        </Node>

        <Node x={837} y={679} w={158} h={94} head="green" icon={<RotIcon />} title="Break Rotator">
          <Pins ins={[data("Rotation", true, ROT)]} outs={[data("X (Roll)", true), data("Y (Pitch)", true), data("Z (Yaw)", true)]} />
        </Node>

        <Node x={795} y={861} w={158} h={94} head="green" icon={<RotIcon />} title="Break Rotator">
          <Pins ins={[data("Rotation", true, ROT)]} outs={[data("X (Roll)", false, "#86dd3c"), data("Y (Pitch)", false, "#86dd3c"), data("Z (Yaw)", true)]} />
        </Node>

        <div className="absolute left-[991px] top-[834px] flex h-[53px] w-[134px] justify-between border border-black border-t-white/50 bg-[linear-gradient(#505050,#303030_38%,#141614_42%,#0a0c0a)] px-[9px] shadow-[0_2px_4px_1px_rgba(0,0,0,0.5)]">
          <span className="absolute left-[56px] top-[13px] opacity-25">
            <svg width="22" height="26" viewBox="0 0 22 26">
              <path d="M8 0h6v10h8v6h-8v10H8V16H0v-6h8z" fill="#fff" />
            </svg>
          </span>
          <div className="pt-[4px]">
            <div className="flex h-[23px] items-center gap-[8px]">
              <DataPin c="#86dd3c" />
              <ValueBox />
            </div>
            <div className="flex h-[23px] items-center">
              <DataPin on c={GREEN} />
            </div>
          </div>
          <div className="-mr-px flex flex-col items-end pt-[2px]">
            <div className="flex h-[23px] items-center pr-px">
              <DataPin on c={GREEN} />
            </div>
            <div className="mt-[7px] flex h-[26px] items-center gap-[6px] whitespace-nowrap text-[11px] tracking-[-0.1px] text-[#ececec] [word-spacing:-0.500px]">
              Add pin
              <Plus s={11} />
            </div>
          </div>
        </div>
      </div>

      {/* Breadcrumb strip */}
      <div className="relative flex h-[42px] items-center bg-[rgba(8,8,8,0.68)] pb-[2px]">
        <svg width="60" height="24" viewBox="0 0 60 24" className="ml-[12px]">
          <path d="M1 12L9 1v6h7v11H9v5z" fill="#e2f0f2" />
          <path d="M59 12L51 1v6h-7v11h7v5z" fill="#8c8c8c" />
        </svg>
        <div className="ml-[616px] flex items-center text-[19px] text-[#8f8f8f]">
          <Squares w={26} />
          <span className="ml-[12px] tracking-[0.35px]">MirrorBP</span>
          <svg width="9" height="14" viewBox="0 0 9 14" className="mx-[8px]" fill="none" stroke="#d0d0d0" strokeWidth="2">
            <path d="M1 1l6 6-6 6" />
          </svg>
          <span className="ml-px tracking-[0.2px]">EventGraph</span>
        </div>
        <span className="-mt-1 ml-auto mr-[7px] origin-right scale-x-[0.860] text-[20.500px] font-bold text-[#343434]">Zoom -1</span>
      </div>
    </div>
  );
}

function DetailsRail() {
  return (
    <div className="flex w-[19px] flex-col">
      <div className="ml-[3px] h-[21px] w-[11px] rounded-t-[3px] bg-[#606060]" />
      <div className="flex w-[18px] flex-1 flex-col items-end rounded-b bg-[#606060] pt-[3px]">
        <div className="flex h-[23px] w-[12px] items-center justify-end rounded-l-[2px] border border-[#333] bg-[linear-gradient(90deg,#eee,#a8a8a8)]">
          <div className="h-[15px] w-[4px] bg-[repeating-linear-gradient(#555_0_1px,transparent_1px_3px)]" />
        </div>
        <div className="mt-[4px] h-[22px] w-[17px] rounded-[3px] bg-[#333]" />
      </div>
    </div>
  );
}

/* ---------- taskbar ---------- */

function Slot({ children, state }: P & { state?: "open" | "active" }) {
  const look = state === "active" ? "border border-[#e0dcc8] bg-[#a69f80]" : state === "open" ? "border border-[#a09a72] bg-[#7d764d]" : "";
  return <div className={"mr-[4px] flex h-[38px] w-[58px] shrink-0 items-center justify-center " + look}>{children}</div>;
}

function Office({ letter, c, kind }: { letter: string; c: string; kind: "grid" | "db" | "chart" | "lines" | "mail" }) {
  return (
    <svg width="32" height="32" viewBox="0 0 34 34">
      {kind === "mail" ? (
        <g>
          <path d="M17 9h15v15H17z" fill="#fff" />
          <path d="M17 10l6 7 9-8M17 24l6-8 9 8" stroke={c} strokeWidth="2" fill="none" />
          <path d="M18 22h16v11H18z" fill="#e8b06e" />
          <path d="M18 22l8 7 8-7" stroke="#fff" strokeWidth="1.500" fill="none" />
        </g>
      ) : (
        <path d="M17 6h14v22H17z" fill={kind === "db" ? "none" : "#fff"} stroke={kind === "db" ? "none" : c} />
      )}
      {kind === "grid" && <path d="M19 10h11M19 14h11M19 18h11M19 22h11M24.500 8v18" stroke={c} strokeWidth="1.500" />}
      {kind === "lines" && <path d="M19 10h11M19 13.500h11M19 17h11M19 20.500h11M19 24h11" stroke={c} strokeWidth="1.500" />}
      {kind === "chart" && (
        <g>
          <path d="M24 10a4.500 4.500 0 104.500 4.500H24z" fill={c} />
          <path d="M19 22h10M19 25h10" stroke={c} strokeWidth="1.500" />
        </g>
      )}
      {kind === "db" && (
        <g fill="#fff">
          <ellipse cx="24" cy="9" rx="7" ry="3" />
          <path d="M17 11c2 2.500 12 2.500 14 0v4c-2 2.500-12 2.500-14 0zM17 16.500c2 2.500 12 2.500 14 0v4c-2 2.500-12 2.500-14 0zM17 22c2 2.500 12 2.500 14 0v3.500c-2 2.500-12 2.500-14 0z" />
        </g>
      )}
      <path d="M2 5.500L19 2v30L2 28.500z" fill={c} />
      <text x="10.500" y="22.500" textAnchor="middle" fontSize="15" fontWeight="700" fill="#fff" fontFamily="Open Sans">
        {letter}
      </text>
    </svg>
  );
}

function WinLogo({ s }: { s: number }) {
  return (
    <svg width={s} height={s} viewBox="0 0 26 26" fill="#fff" className="shrink-0">
      <path d="M0 4l11-1.600V12.500H0zM12 2.200L26 0v12.500H12zM0 13.500h11v10.200L0 22.200zM12 13.500h14V26l-14-2.100z" />
    </svg>
  );
}

function Putty() {
  return (
    <svg width="34" height="34" viewBox="0 0 34 34" stroke="#000">
      <path d="M17 2h13v12H17zM15 14h17v4H15z" fill="#c8c8c8" />
      <path d="M19 4h9v8h-9z" fill="#1010d8" />
      <path d="M5 16h13v11H5zM2 27h18v4.500H2z" fill="#c8c8c8" />
      <path d="M7 18h9v7H7z" fill="#1010d8" />
      <path d="M23 7l-10 8 4 1-6 7 12-8-4-1z" fill="#ffee20" strokeWidth=".6" />
    </svg>
  );
}

function Taskbar() {
  return (
    <div className="flex h-[41px] items-center border-t border-[#2c2712] bg-[linear-gradient(90deg,#655a2b,#6a5c2e_30%,#75683c_35%,#665a2b_42%,#6f6335_60%,#665a2b_80%)] [font-family:'Open_Sans','Noto_Sans',sans-serif]">
      <div className="flex w-[52px] items-center pl-[12px]">
        <WinLogo s={26} />
      </div>
      <Slot state="open">
        <svg width="34" height="30" viewBox="0 0 34 30">
          <path d="M8 1l13 5-6 16L1 16z" fill="#7ecb6a" />
          <path d="M10 5l14 2-2 15-15-2z" fill="#8fc4dd" />
          <path d="M12 9l15-5 6 16-16 7z" fill="#f2dd77" />
        </svg>
      </Slot>
      <Slot state="open">
        <svg width="34" height="32" viewBox="0 0 34 32">
          <path d="M2 3h10l2 2h17v4H2z" fill="#d9b65e" />
          <path d="M5 2h5v3H5zM14 3h5v3h-5z" fill="#3f9f4d" />
          <path d="M22 4h5v3h-5z" fill="#d8503c" />
          <path d="M1 7h32l-1 20H2z" fill="#f1dc8e" />
          <path d="M1 11h32" stroke="#dcc06a" />
          <path d="M6 30V20q0-2 2-2h18q2 0 2 2v10h-5v-7H11v7z" fill="#93cfe8" stroke="#4a95bd" />
        </svg>
      </Slot>
      <Slot state="open">
        <svg width="32" height="32" viewBox="0 0 32 32">
          <circle cx="16" cy="16" r="14.500" fill="#e66a14" />
          <circle cx="17" cy="13" r="10.500" fill="#1a5fa8" />
          <path d="M20 2c7 1 11 8 10.500 15-1 8-7 13-14 13 9-3 12-10 10-17-1-4-4-7-6.500-11z" fill="#f7bb2e" />
          <path d="M2 8c2-1 4 0 5 1 3-1 6 0 8 2-2 1-4 2-4 3 3 1 5 1 7 0-1 6-6 7-9 5 2 5 9 6 14 2-3 9-16 12-20 2C1 18 1 12 2 8z" fill="#d9501a" />
        </svg>
      </Slot>
      <div className="mr-[4px] flex">
        <div className="flex h-[38px] w-[54px] items-center justify-center border border-[#a09a72] bg-[#7d764d] pr-[2px]">
          <Office letter="O" c="#0f6cbf" kind="mail" />
        </div>
        <div className="h-[38px] w-[4px] border border-l-0 border-[#a09a72] bg-[#7d764d]" />
      </div>
      <Slot><Office letter="X" c="#1f7244" kind="grid" /></Slot>
      <Slot><Office letter="A" c="#a33639" kind="db" /></Slot>
      <Slot><Office letter="P" c="#d24625" kind="chart" /></Slot>
      <Slot><Office letter="W" c="#2a5699" kind="lines" /></Slot>
      <Slot>
        <div className="flex h-[28px] w-[28px] items-center justify-center border-2 border-[#4fb9e3] bg-[#0b1a2c] text-[14px] font-semibold text-[#4fc3ee]">Ps</div>
      </Slot>
      <Slot>
        <svg width="34" height="32" viewBox="0 0 34 32">
          <path d="M24 1l8 4v22l-8 4L11 20l-6 5-4-2V9l4-2 6 5z" fill="#5c2483" stroke="#fff" strokeWidth="1.600" />
          <path d="M25 10v12l-7-6zM5 12v8l4-4z" fill="#fff" />
        </svg>
      </Slot>
      <Slot>
        <svg width="30" height="30" viewBox="0 0 30 30">
          <defs>
            <linearGradient id="it" x1="0" y1="0" x2="0" y2="1">
              <stop offset="0" stopColor="#e8476e" />
              <stop offset="1" stopColor="#3c82e8" />
            </linearGradient>
          </defs>
          <circle cx="15" cy="15" r="13" fill="#fbfbfd" stroke="url(#it)" strokeWidth="1.600" />
          <path d="M11 8.500l9-2v11.500a2.700 2.300 0 11-1.800-2.200V10.500L13 11.700v8.100a2.700 2.300 0 11-2-2.100z" fill="url(#it)" />
        </svg>
      </Slot>
      <Slot>
        <svg width="30" height="34" viewBox="0 0 30 34" className="overflow-visible">
          <path d="M3 1h24q2 0 2 2v24l-14 6L1 27V3q0-2 2-2z" fill="#2e2c2d" stroke="#b8b4a8" />
          <g transform="scale(.62 1)" fontFamily="Roboto" fontWeight="700" textAnchor="middle">
            <text x="24.200" y="17.500" fontSize="17" fill="#fff">EPIC</text>
          </g>
          <text x="15" y="26" textAnchor="middle" fontSize="6" fontWeight="700" fill="#ddd" fontFamily="Roboto">GAMES</text>
        </svg>
      </Slot>
      <Slot>
        <svg width="32" height="32" viewBox="0 0 32 32" fill="none">
          <path d="M27 22c-2 5-8 7-13 5-8-3-9-14-2-19 7-4 16 0 16 9H10" stroke="#43b5ec" strokeWidth="5" />
          <path d="M4 30C-1 26 6 14 14 8 21 2 29-1 30 5c0 2-1 4-1.500 5" stroke="#f2c12c" strokeWidth="2.400" />
        </svg>
      </Slot>
      <Slot>
        <svg width="32" height="32" viewBox="0 0 32 32">
          <path d="M0 0h32v32H0z" fill="#bfe3e2" />
          <path d="M0 32V20L14 32z" fill="#1c8b8c" />
          <path d="M8 4l10-1 7 6v8l-8 8-8-1 4-9z" fill="#0f9094" />
          <path d="M8 4l10-1 1 9-8 4z" fill="#36b9b6" />
          <path d="M15 25h17v7H15z" fill="#d6dcdc" />
          <text x="23.500" y="31" textAnchor="middle" fontSize="6.500" fontWeight="700" fill="#333" fontFamily="Roboto">MAX</text>
        </svg>
      </Slot>
      <Slot>
        <svg width="32" height="32" viewBox="0 0 32 32">
          <path transform="translate(1 0) scale(1.480)" d={gearPath} fill="#c8c6ba" stroke="#77756a" strokeWidth=".6" fillRule="evenodd" />
          <path d="M17 15l10-8M17 16l7 9" stroke="#66644f" strokeWidth="1.500" />
          <text x="24" y="19" textAnchor="middle" fontSize="8" fontWeight="700" fill="#555" fontFamily="Roboto">2</text>
        </svg>
      </Slot>
      <Slot><Putty /></Slot>
      <Slot state="active">
        <div className="flex h-[30px] w-[30px] items-center justify-center rounded-full border border-[#d8d8d8] bg-[#2a2a2a]">
          <Unreal className="h-[23px] w-[23px] text-white" />
        </div>
      </Slot>
      <Slot state="open">
        <div className="mb-[3px] flex h-[27px] w-[28px] items-center justify-center bg-[#da1f1c]">
          <svg width="22" height="16" viewBox="0 0 24 17" fill="none" stroke="#fff" strokeWidth="1.500">
            <path d="M7 15.500A6 6 0 117.800 3.600 7.200 7.200 0 1116 15.500z" />
            <path d="M13.500 12.200L9.300 8a3 3 0 10-2.300 5h2M9.500 5.500a4.800 4.800 0 018.500.5M13 8.500l3.300 3.500a3 3 0 10-.5-5.500" />
          </svg>
        </div>
      </Slot>

      <div className="ml-auto flex items-center">
        <svg width="8" height="5" viewBox="0 0 8 5"><path d="M0 5l4-5 4 5z" fill="#fff" /></svg>
        <svg width="16" height="16" viewBox="0 0 16 16" className="ml-[12px]" fill="#fff">
          <path d="M1 1h1.500v14H1zM3.500 2c3-1 4 0 5.500.5V8C7 7.500 5.500 7 3.500 8zM9.500 4c2 .8 3.500.6 6 0l-1.500 3 1 2c-2 .6-3.500.6-5.500 0z" />
        </svg>
        <span className="ml-[9px]"><WinLogo s={15} /></span>
        <svg width="17" height="15" viewBox="0 0 17 15" className="ml-[8px]" fill="none" stroke="#fff" strokeWidth="1.400">
          <path d="M6.500 3.500h9v7h-10M10.500 10.500v3M7 13.700h7M1 1h4v4H1zM3 5v8" />
        </svg>
        <svg width="16" height="15" viewBox="0 0 16 15" className="ml-[7px]" fill="none" stroke="#fff">
          <path d="M0 5h3l4-4v13l-4-4H0z" fill="#fff" stroke="none" />
          <path d="M9 5q2 2.500 0 5M11 3.500q3 4 0 8M13 2q4.500 5.500 0 11" strokeWidth="1.100" />
        </svg>
        <div className="ml-[16px] mr-[16px] mt-[2px] flex w-[54px] flex-col items-center whitespace-nowrap text-[12px] leading-[17px] tracking-[-0.450px] text-white">
          <span>10:40 PM</span>
          <span>9/24/2015</span>
        </div>
      </div>
    </div>
  );
}

export default function App() {
  return (
    <div className="flex h-[1080px] w-[1920px] flex-col overflow-hidden bg-[#222] [font-family:Roboto,'Liberation_Sans',sans-serif]">
      <TitleBar />
      <MenuBar />
      <div className="flex flex-1 pt-px">
        <div className="ml-px flex w-[346px] flex-col">
          <div className="pl-1">
            <DockTab
              icon={
                <svg width="15" height="15" viewBox="0 0 15 15">
                  <path d="M4.500.5h6v6.500h-6z" fill="#7f8fb0" />
                  <path d="M7.500 7v5M2 9.500l5.500 2.300 5.500-2.300" stroke="#c8ccd4" strokeWidth="1.300" fill="none" />
                  <path d="M0 8h4v3H0zM11 8h4v3h-4zM5.500 11.500h4l-2 3z" fill="#b9c0cf" />
                </svg>
              }
            >
              Components
            </DockTab>
          </div>
          <ComponentsPanel />
          <div className="pl-1 pt-[5px]">
            <DockTab icon={<Book />}>My Blueprint</DockTab>
          </div>
          <MyBlueprint />
          <div className="h-px" />
        </div>
        <div className="ml-[5px] flex w-[1567px] flex-col">
          <div className="pl-1">
            <DockTab
              icon={
                <svg width="15" height="15" viewBox="0 0 15 15" fill="none">
                  <path d="M2 2l10 11" stroke="#86a3e0" strokeWidth="2.400" />
                  <path d="M2 13.500l8-8.500" stroke="#fff" strokeWidth="2.400" />
                  <path d="M13.800 2.500A3 3 0 119.500 1" stroke="#fff" strokeWidth="2" />
                </svg>
              }
            >
              Toolbar
            </DockTab>
          </div>
          <Toolbar />
          <div className="mt-[5px] flex flex-1 justify-between">
            <div>
              <div className="flex gap-px pl-1">
                <DockTab
                  tone="idle"
                  icon={
                    <svg width="13" height="14" viewBox="0 0 13 14">
                      <path d="M0 0h6v6H0z" fill="#6d93c5" />
                      <path d="M7 0h6v6H7z" fill="#eef5ff" />
                      <path d="M0 7h6v7H0zM7 7h6v7H7z" fill="#7fa4d2" />
                    </svg>
                  }
                >
                  Viewport
                </DockTab>
                <DockTab tone="idle" icon={<Func />}>
                  Construction Script
                </DockTab>
                <DockTab tone="hot" icon={<Squares w={15} />}>Event Graph</DockTab>
                <DockTab tone="idle" icon={<Clock />}>
                  Timeline_0_Templa
                </DockTab>
              </div>
              <Graph />
            </div>
            <DetailsRail />
          </div>
        </div>
      </div>
      <Taskbar />
    </div>
  );
}
